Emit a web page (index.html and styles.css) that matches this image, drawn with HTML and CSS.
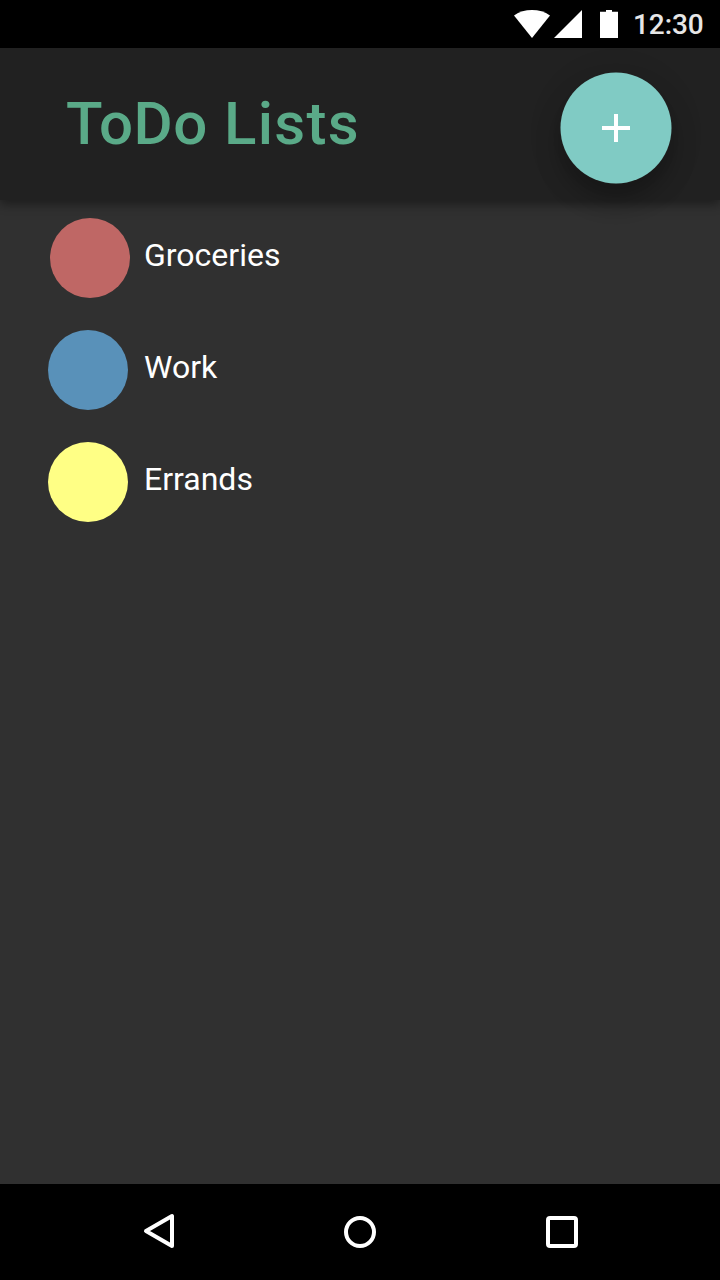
FILE: index.html
```html
<!DOCTYPE html>
<html lang="en">
<head>
<meta charset="utf-8">
<title>ToDo Lists</title>
<link rel="stylesheet" href="styles.css">
</head>
<body>
<div class="screen">
  <div class="status-bar">
    <svg class="status-icons" width="108" height="48" viewBox="0 0 108 48" fill="#fff">
      <path d="M0 15.500C5 11.800 11.500 10 18 10S31 11.800 36 15.500L18 38Z"/>
      <path d="M40 38H68V10Z"/>
      <path d="M86 11.700H92V10H98V11.700H104V38H86Z"/>
    </svg>
    <span class="clock">12:30</span>
  </div>
  <header class="app-bar">
    <h1 class="title"><span class="title-lead">ToDo</span> Lists</h1>
    <button class="fab" aria-label="Add list">
      <svg width="112" height="112" viewBox="0 0 112 112"><circle cx="56" cy="56" r="55.500" fill="#80cbc4"/><path d="M54 42h4v12h12v4H58v12h-4V58H42v-4h12z" fill="#fff"/></svg>
    </button>
  </header>
  <main class="content">
    <ul class="lists">
      <li class="list-item"><span class="dot dot-red"></span><span class="label">Groceries</span></li>
      <li class="list-item"><span class="dot dot-blue"></span><span class="label">Work</span></li>
      <li class="list-item"><span class="dot dot-yellow"></span><span class="label">Errands</span></li>
    </ul>
  </main>
  <nav class="nav-bar">
    <svg width="32" height="40" viewBox="0 0 32 40" fill="none" stroke="#fff" stroke-width="4" stroke-linejoin="round"><path d="M30 4V34L4 19Z"/></svg>
    <svg width="32" height="32" viewBox="0 0 32 32" fill="none" stroke="#fff" stroke-width="4"><circle cx="16" cy="16" r="14"/></svg>
    <svg width="32" height="32" viewBox="0 0 32 32" fill="none" stroke="#fff" stroke-width="4"><rect x="2" y="2" width="28" height="28" rx="2"/></svg>
  </nav>
</div>
</body>
</html>
```
FILE: styles.css
```css
* { box-sizing: border-box; }
body { margin: 0; background: #303030; font-family: Roboto, sans-serif; }
.screen { width: 720px; height: 1280px; display: flex; flex-direction: column; background: #303030; overflow: hidden; }
.status-bar { height: 48px; flex: none; display: flex; align-items: flex-start; justify-content: flex-end; padding-right: 16px; background: #000; }
.status-icons { display: block; margin-right: 11px; }
.clock { width: 71px; text-align: left; font-size: 28px; font-weight: 500; line-height: 50px; letter-spacing: -0.1px; color: #e6e6e6; }
.app-bar { height: 152px; flex: none; display: flex; justify-content: space-between; align-items: flex-start; padding: 24px 48px 0 66px; background: #212121; box-shadow: 0 4px 10px rgba(0, 0, 0, 0.42); }
.title { margin: 17px 0 0; font-size: 60px; line-height: 70px; font-weight: 500; letter-spacing: 1.3px; color: #5aaa88; }
.title-lead { letter-spacing: 0.5px; }
.fab { width: 112px; height: 112px; padding: 0; border: 0; border-radius: 50%; background: none; box-shadow: 0 16px 24px rgba(0, 0, 0, 0.25), 0 6px 36px rgba(0, 0, 0, 0.1); }
.fab svg { display: block; }
.content { flex: 1; padding: 18px 48px 0; }
.lists { margin: 0; padding: 0; list-style: none; display: flex; flex-direction: column; gap: 32px; }
.list-item { height: 80px; display: flex; gap: 16px; }
.dot { width: 80px; height: 80px; border-radius: 50%; }
.dot-red { margin: 0 -2px 0 2px; background: #bf6765; }
.dot-blue { background: #5991b9; }
.dot-yellow { background: #ffff85; }
.label { font-size: 32px; line-height: 74px; color: #fff; }
.nav-bar { height: 96px; flex: none; display: flex; align-items: center; justify-content: space-between; padding: 0 142px; background: #000; }
```
